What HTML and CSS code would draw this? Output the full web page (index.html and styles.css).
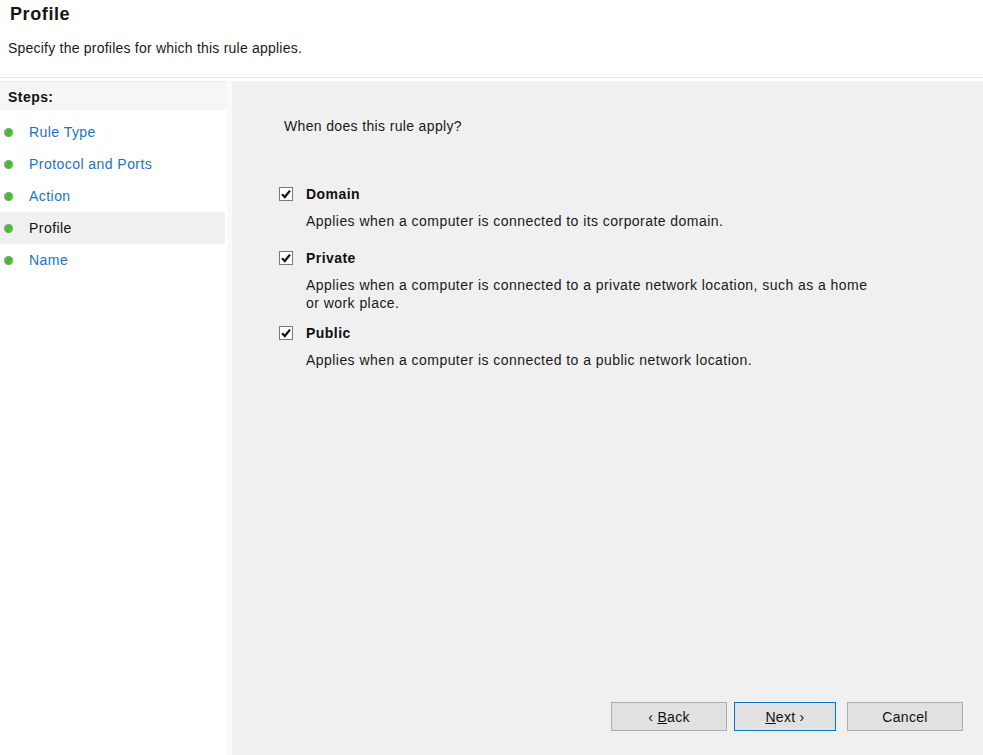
FILE: index.html
```html
<!DOCTYPE html>
<html>
<head>
<meta charset="utf-8">
<link rel="stylesheet" href="styles.css">
</head>
<body>
<div class="page">
  <header class="header">
    <h1 class="title">Profile</h1>
    <p class="subtitle">Specify the profiles for which this rule applies.</p>
  </header>
  <div class="main">
    <aside class="steps">
      <div class="steps-head">Steps:</div>
      <ul class="step-list">
        <li class="step"><span class="dot"></span><span class="step-link">Rule Type</span></li>
        <li class="step"><span class="dot"></span><span class="step-link">Protocol and Ports</span></li>
        <li class="step"><span class="dot"></span><span class="step-link">Action</span></li>
        <li class="step current"><span class="dot"></span><span class="step-text">Profile</span></li>
        <li class="step"><span class="dot"></span><span class="step-link">Name</span></li>
      </ul>
    </aside>
    <div class="divider"></div>
    <section class="content">
      <p class="question">When does this rule apply?</p>
      <div class="option opt-domain">
        <div class="opt-row">
          <svg class="check" width="14" height="14" viewBox="0 0 14 14"><rect x="0.5" y="0.5" width="13" height="13" fill="#fff" stroke="#7a7a7a"/><path d="M3 7.2 L5.8 10 L11 3.6" fill="none" stroke="#111" stroke-width="2.2"/></svg>
          <span class="opt-label">Domain</span>
        </div>
        <p class="opt-desc">Applies when a computer is connected to its corporate domain.</p>
      </div>
      <div class="option opt-private">
        <div class="opt-row">
          <svg class="check" width="14" height="14" viewBox="0 0 14 14"><rect x="0.5" y="0.5" width="13" height="13" fill="#fff" stroke="#7a7a7a"/><path d="M3 7.2 L5.8 10 L11 3.6" fill="none" stroke="#111" stroke-width="2.2"/></svg>
          <span class="opt-label">Private</span>
        </div>
        <p class="opt-desc">Applies when a computer is connected to a private network location, such as a home<br>or work place.</p>
      </div>
      <div class="option opt-public">
        <div class="opt-row">
          <svg class="check" width="14" height="14" viewBox="0 0 14 14"><rect x="0.5" y="0.5" width="13" height="13" fill="#fff" stroke="#7a7a7a"/><path d="M3 7.2 L5.8 10 L11 3.6" fill="none" stroke="#111" stroke-width="2.2"/></svg>
          <span class="opt-label">Public</span>
        </div>
        <p class="opt-desc">Applies when a computer is connected to a public network location.</p>
      </div>
      <div class="buttons">
        <button class="btn btn-back">‹ <u>B</u>ack</button>
        <button class="btn btn-next"><u>N</u>ext ›</button>
        <button class="btn btn-cancel">Cancel</button>
      </div>
    </section>
  </div>
</div>
</body>
</html>
```
FILE: styles.css
```css
html, body {
  margin: 0;
  padding: 0;
  background: #ffffff;
}
body {
  font-family: "Liberation Sans", Arial, sans-serif;
  font-size: 14px;
  letter-spacing: 0.45px;
  color: #000;
  width: 983px;
  height: 755px;
  overflow: hidden;
}
.page {
  display: flex;
  flex-direction: column;
  height: 755px;
}
.header {
  height: 78px;
  border-bottom: 1px solid #e4e4e4;
  padding-left: 8px;
  box-sizing: border-box;
}
.title {
  margin: 0;
  padding-top: 4px;
  padding-left: 2px;
  font-size: 18px;
  font-weight: bold;
  letter-spacing: 0.6px;
  line-height: 20px;
  color: #151515;
}
.subtitle {
  margin: 0;
  padding-top: 15px;
  line-height: 18px;
  letter-spacing: 0.22px;
  color: #1a1a1a;
}
.main {
  flex: 1;
  display: flex;
  padding-top: 3px;
}
.steps {
  width: 227px;
  background: #fff;
}
.steps-head {
  height: 29px;
  line-height: 30px;
  padding-left: 8px;
  font-weight: bold;
  background: #f6f6f6;
  border-top: 1px solid #ededed;
  box-sizing: border-box;
  color: #111;
}
.step-list {
  list-style: none;
  margin: 6px 0 0 0;
  padding: 0;
}
.step {
  height: 32px;
  display: flex;
  align-items: center;
  margin-right: 2px;
}
.step.current {
  background: #f0f0f0;
}
.dot {
  width: 9px;
  height: 9px;
  border-radius: 50%;
  margin-left: 4px;
  margin-right: 16px;
  background: radial-gradient(circle at 75% 65%, #52c936 0%, #47b82c 35%, #6fa85e 60%, #a8a8a8 100%);
}
.step-link {
  color: #1a73c9;
}
.step-text {
  color: #111;
}
.divider {
  width: 5px;
  background: #fafafa;
}
.content {
  flex: 1;
  background: #f0f0f0;
  display: flex;
  flex-direction: column;
  padding-left: 47px;
  padding-right: 20px;
  padding-bottom: 24px;
}
.question {
  margin: 36px 0 0 5px;
  line-height: 18px;
  letter-spacing: 0.35px;
  color: #1a1a1a;
}
.option {
  display: flex;
  flex-direction: column;
}
.opt-domain { margin-top: 49px; }
.opt-private { margin-top: 18px; }
.opt-public { margin-top: 11px; }
.opt-row {
  display: flex;
  align-items: center;
  height: 20px;
}
.check {
  display: block;
  margin-right: 13px;
}
.opt-label {
  font-weight: bold;
  color: #111;
}
.opt-desc {
  margin: 8px 0 0 27px;
  line-height: 18px;
  color: #1a1a1a;
}
.buttons {
  margin-top: auto;
  display: flex;
  justify-content: flex-end;
}
.btn {
  height: 29px;
  font-family: "Liberation Sans", Arial, sans-serif;
  font-size: 14px;
  letter-spacing: 0.3px;
  color: #111;
  background: #e1e1e1;
  border: 1px solid #adadad;
  padding: 0;
}
.btn-back { width: 116px; }
.btn-next {
  width: 102px;
  margin-left: 7px;
  border-color: #0078d7;
}
.btn-cancel {
  width: 116px;
  margin-left: 11px;
}
```
